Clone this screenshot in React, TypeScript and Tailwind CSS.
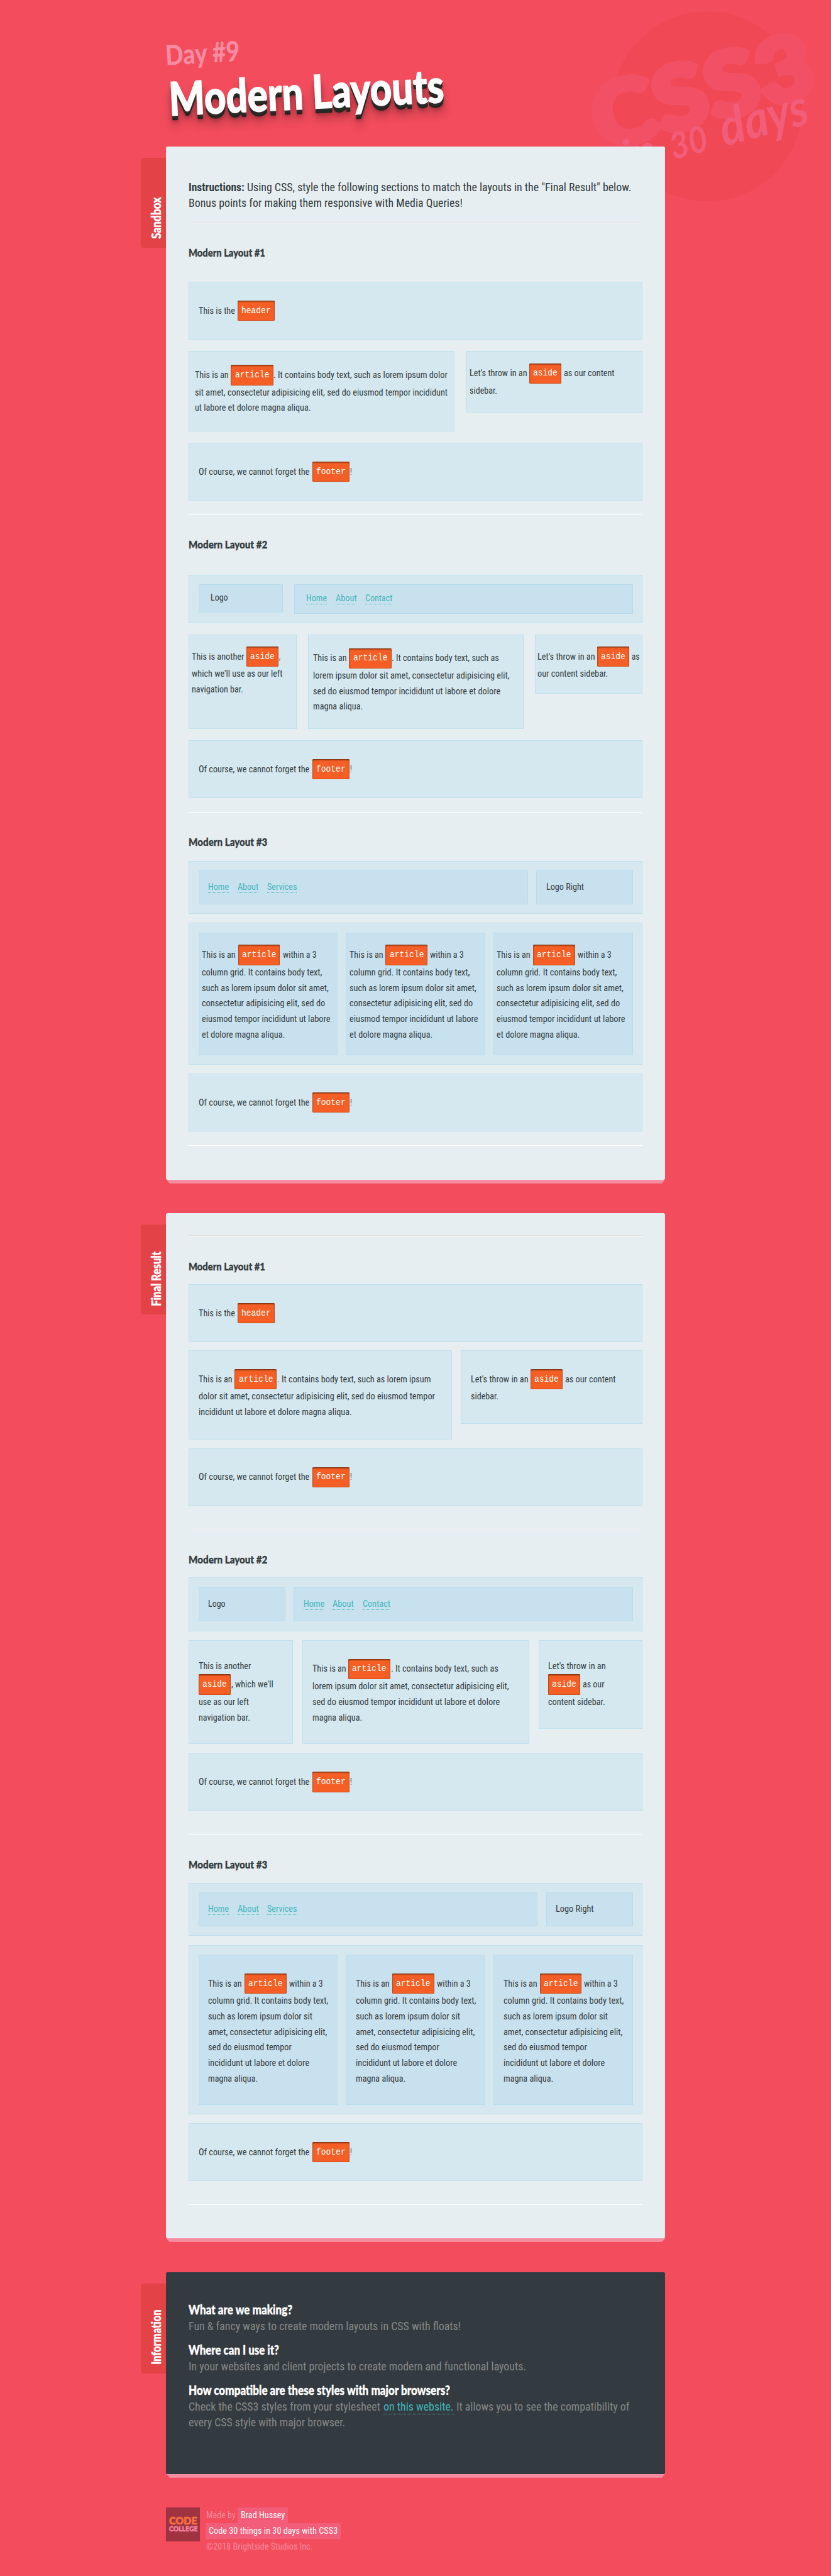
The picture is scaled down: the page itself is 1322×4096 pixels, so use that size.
import React, { useLayoutEffect, useRef } from "react";

/** A text run whose glyphs are condensed or widened to fill a given width. */
function Fit({ w, children, className = "" }: { w: number; children: string; className?: string }) {
  const ref = useRef<HTMLSpanElement>(null);
  useLayoutEffect(() => {
    const el = ref.current;
    if (!el) return;
    const natural = parseFloat(getComputedStyle(el).width);
    if (natural > 0) el.style.transform = `scaleX(${w / natural})`;
  }, [w, children]);
  return (
    <span className={`block shrink-0 text-left ${className}`} style={{ width: w }}>
      <span ref={ref} className="inline-block origin-left whitespace-pre [font-stretch:75%]">
        {children}
      </span>
    </span>
  );
}

/** Text with its width, a code tag ("#name") with its width, or a bare gap. */
type Seg = [string, number] | number;

function Tag({ name, w }: { name: string; w: number }) {
  return (
    <span
      className="flex h-[47px] shrink-0 items-center justify-center rounded-[3px] bg-[#f55f25] font-['Liberation_Mono'] text-[21px] text-white shadow-[inset_0_2px_3px_#7c2f10,inset_0_0_1px_1px_#c94c1c]"
      style={{ width: w }}
    >
      <Fit w={name.length * 11.3}>{name}</Fit>
    </span>
  );
}

function Line({ s }: { s: Seg[] }) {
  const tagged = s.some((x) => typeof x !== "number" && x[0].startsWith("#"));
  return (
    <div className={tagged ? "flex h-[46px] items-center pt-[2px]" : "flex h-[36px] items-center"}>
      {s.map((x, i) =>
        typeof x === "number" ? (
          <span key={i} className="shrink-0" style={{ width: x }} />
        ) : x[0].startsWith("#") ? (
          <Tag key={i} name={x[0].slice(1)} w={x[1]} />
        ) : (
          <Fit key={i} w={x[1]}>{x[0]}</Fit>
        ),
      )}
    </div>
  );
}

function Text({ lines }: { lines: Seg[][] }) {
  return <>{lines.map((l, i) => <Line key={i} s={l} />)}</>;
}

function Box({ className = "", children }: { className?: string; children?: React.ReactNode }) {
  return <div className={`shrink-0 border border-[#bfe0ec] bg-[#d5e8ef] ${className}`}>{children}</div>;
}

function Inner({ className = "", children }: { className?: string; children?: React.ReactNode }) {
  return <div className={`shrink-0 border border-[#b8dced] bg-[#c8e1ee] ${className}`}>{children}</div>;
}

function Rule({ className = "" }: { className?: string }) {
  return <div className={`h-[2px] bg-[linear-gradient(#dddfdf_50%,#ffffff_50%)] ${className}`} />;
}

function Heading({ n, className = "" }: { n: number; className?: string }) {
  return (
    <h3 className={`h-[36px] font-['Lato'] text-[25px] font-black leading-[36px] [-webkit-text-stroke:0.5px_#333c41] ${className}`}>
      <Fit w={n === 1 ? 177 : 182}>{`Modern Layout #${n}`}</Fit>
    </h3>
  );
}

function Nav({ items }: { items: [string, number][] }) {
  return (
    <nav className="flex gap-[20px] text-[#41b6bb]">
      {items.map(([t, w]) => (
        <a key={t} className="block h-[32px] border-b border-dotted border-[#41b6bb]">
          <Fit w={w}>{t}</Fit>
        </a>
      ))}
    </nav>
  );
}

function HeaderBox({ className }: { className: string }) {
  return (
    <Box className={`h-[133px] pl-[22px] pt-[41px] ${className}`}>
      <Line s={[["This is the", 84], 5, ["#header", 86]]} />
    </Box>
  );
}

function FooterBox({ className }: { className: string }) {
  return (
    <Box className={`h-[133px] pl-[22px] pt-[41px] ${className}`}>
      <Line s={[["Of course, we cannot forget the", 256], 6, ["#footer", 86], 2, ["!", 4]]} />
    </Box>
  );
}

function Section({ tab, tabW, tabH, className, children }: { tab: string; tabW: number; tabH: string; className: string; children: React.ReactNode }) {
  return (
    <section className={`relative w-[1153px] rounded-[4px] px-[52px] ${className}`}>
      <div className={`absolute -left-[58px] top-[26px] w-[58px] rounded-l-[6px] bg-[#e34246] ${tabH}`}>
        <div className="absolute bottom-[20px] left-[53px] h-[36px] origin-bottom-left -rotate-90 font-['Lato'] text-[29px] font-black leading-[36px] text-white [-webkit-text-stroke:0.6px_#ffffff]">
          <Fit w={tabW}>{tab}</Fit>
        </div>
      </div>
      {children}
      <div className="absolute left-0 top-full h-[9px] w-full bg-[#f68ca0] [clip-path:polygon(0_0,100%_0,calc(100%_-_8px)_100%,8px_100%)]" />
    </section>
  );
}

function Question({ w, className = "", children }: { w: number; className?: string; children: string }) {
  return (
    <h4 className={`h-[36px] font-['Lato'] text-[30px] font-black text-white [-webkit-text-stroke:0.6px_#ffffff] ${className}`}>
      <Fit w={w}>{children}</Fit>
    </h4>
  );
}

const columnWide: Seg[][] = [
  [["This is an", 78], 6, ["#article", 97], 6, ["within a 3", 78]],
  [["column grid. It contains body text,", 278]],
  [["such as lorem ipsum dolor sit amet,", 293]],
  [["consectetur adipisicing elit, sed do", 285]],
  [["eiusmod tempor incididunt ut labore", 297]],
  [["et dolore magna aliqua.", 192]],
];

const columnNarrow: Seg[][] = [
  [["This is an", 78], 6, ["#article", 97], 6, ["within a 3", 78]],
  [["column grid. It contains body text,", 278]],
  [["such as lorem ipsum dolor sit", 241]],
  [["amet, consectetur adipisicing elit,", 275]],
  [["sed do eiusmod tempor", 193]],
  [["incididunt ut labore et dolore", 234]],
  [["magna aliqua.", 115]],
];

const articleMiddle: Seg[][] = [
  [["This is an", 78], 5, ["#article", 98], 1, [". It contains body text, such as", 248]],
  [["lorem ipsum dolor sit amet, consectetur adipisicing elit,", 454]],
  [["sed do eiusmod tempor incididunt ut labore et dolore", 433]],
  [["magna aliqua.", 115]],
];

function Badge() {
  return (
    <svg className="absolute left-0 top-0 h-[500px] w-[1920px]" viewBox="0 0 1920 500">
      <circle cx="1634" cy="245.5" r="219.5" fill="#f04955" />
      <text x="1389" y="349" transform="rotate(-15 1389 349)" fontFamily="Lato" fontWeight="900" fontSize="204" textLength="522" lengthAdjust="spacingAndGlyphs" fill="#f25065" stroke="#f25065" strokeWidth="14" strokeLinejoin="round">
        CSS3
      </text>
      <g fill="#f25d79" fontFamily="Lato" fontWeight="700" fontStyle="italic">
        <text x="1448" y="396" transform="rotate(-15 1448 396)" fontSize="100">in</text>
        <text x="1556" y="369" transform="rotate(-15 1556 369)" fontSize="84" textLength="88" lengthAdjust="spacingAndGlyphs">30</text>
        <text x="1674" y="338" transform="rotate(-15 1674 338)" fontSize="118" textLength="208" lengthAdjust="spacingAndGlyphs">days</text>
      </g>
    </svg>
  );
}

export default function App() {
  return (
    <div className="h-[4096px] w-[1322px] overflow-hidden bg-[#f34c5c]">
      <div className="relative h-[5950px] w-[1920px] pl-[384px] font-['Roboto'] text-[20.8px] leading-[36px] text-[#333c41] [zoom:0.68854]">
        <Badge />

        <header className="relative h-[338px] pt-[102px] font-['Lato'] font-black">
          <div className="h-[50px] w-[172px] origin-[0_50px] -rotate-[3.6deg] text-[64px] leading-[50px] text-[#f68ba1]">
            <Fit w={172}>Day #9</Fit>
          </div>
          <h1 className="ml-[8px] mt-[32px] h-[84px] w-[638px] origin-[0_84px] -rotate-[2.8deg] text-[107px] leading-[84px] text-white [-webkit-text-stroke:2px_#ffffff] [text-shadow:0_2px_0_#2b2b28,0_4px_0_#2b2b28,0_6px_0_#2b2b28,0_8px_0_#272724,0_10px_0_#232320,0_11px_0_#232320,0_14px_10px_rgba(0,0,0,0.3),0_24px_24px_rgba(0,0,0,0.3)]">
            <Fit w={636}>Modern Layouts</Fit>
          </h1>
        </header>

        <Section tab="Sandbox" tabW={96} tabH="h-[208px]" className="h-[2386px] bg-[#e6eef1] pt-[77px]">
          <div className="text-[26px]">
            <div className="flex h-[36px]">
              <Fit w={129} className="font-bold">Instructions:</Fit>
              <Fit w={888} className="ml-[6px]">Using CSS, style the following sections to match the layouts in the "Final Result" below.</Fit>
            </div>
            <Fit w={633}>Bonus points for making them responsive with Media Queries!</Fit>
          </div>
          <Rule className="mt-[26px]" />

          <Heading n={1} className="mt-[51px]" />
          <HeaderBox className="mt-[49px]" />
          <div className="mt-[26px] flex h-[187px] items-start justify-between">
            <Box className="h-[187px] w-[614px] pl-[13px] pt-[31px]">
              <Text
                lines={[
                  [["This is an", 78], 5, ["#article", 98], 1, [". It contains body text, such as lorem ipsum dolor", 402]],
                  [["sit amet, consectetur adipisicing elit, sed do eiusmod tempor incididunt", 584]],
                  [["ut labore et dolore magna aliqua.", 268]],
                ]}
              />
            </Box>
            <Box className="h-[143px] w-[409px] pl-[8px] pt-[27px]">
              <Text
                lines={[
                  [["Let's throw in an", 133], 5, ["#aside", 74], 6, ["as our content", 117]],
                  [["sidebar.", 64]],
                ]}
              />
            </Box>
          </div>
          <FooterBox className="mt-[26px]" />
          <Rule className="mt-[32px]" />

          <Heading n={2} className="mt-[51px]" />
          <Box className="mt-[50px] flex h-[113px] items-start justify-between px-[21px] pt-[21px]">
            <Inner className="h-[65px] w-[195px] pl-[26px] pt-[12px]">
              <Fit w={40}>Logo</Fit>
            </Inner>
            <Inner className="h-[68px] w-[783px] pl-[26px] pt-[13px]">
              <Nav items={[["Home", 48], ["About", 49], ["Contact", 63]]} />
            </Inner>
          </Box>
          <div className="mt-[26px] flex h-[218px] items-start justify-between">
            <Box className="h-[218px] w-[249px] pl-[6px] pt-[25px]">
              <Text
                lines={[
                  [["This is another", 121], 5, ["#aside", 74], 1, [",", 3]],
                  [["which we'll use as our left", 210]],
                  [["navigation bar.", 119]],
                ]}
              />
            </Box>
            <Box className="h-[218px] w-[499px] pl-[11px] pt-[29px]">
              <Text lines={articleMiddle} />
            </Box>
            <Box className="h-[136px] w-[249px] pl-[5px] pt-[25px]">
              <Text
                lines={[
                  [["Let's throw in an", 133], 4, ["#aside", 74], 6, ["as", 18]],
                  [["our content sidebar.", 163]],
                ]}
              />
            </Box>
          </div>
          <FooterBox className="mt-[26px]" />
          <Rule className="mt-[32px]" />

          <Heading n={3} className="mt-[51px]" />
          <Box className="mt-[24px] flex h-[123px] items-start justify-between px-[21px] pt-[21px]">
            <Inner className="h-[79px] w-[761px] pl-[21px] pt-[19px]">
              <Nav items={[["Home", 48], ["About", 48], ["Services", 69]]} />
            </Inner>
            <Inner className="h-[79px] w-[223px] pl-[21px] pt-[19px]">
              <Fit w={87}>Logo Right</Fit>
            </Inner>
          </Box>
          <Box className="mt-[20px] flex h-[328px] items-start justify-between px-[21px] pt-[21px]">
            {[0, 1, 2].map((i) => (
              <Inner key={i} className="h-[284px] w-[322px] pl-[6px] pt-[27px]">
                <Text lines={columnWide} />
              </Inner>
            ))}
          </Box>
          <FooterBox className="mt-[21px]" />
          <Rule className="mt-[32px]" />
        </Section>

        <Section tab="Final Result" tabW={126} tabH="h-[208px]" className="mt-[78px] h-[2367px] bg-[#e6eef1] pt-[51px]">
          <Rule />
          <Heading n={1} className="mt-[52px]" />
          <HeaderBox className="mt-[23px]" />
          <div className="mt-[20px] flex h-[206px] items-start justify-between">
            <Box className="h-[206px] w-[608px] pl-[22px] pt-[41px]">
              <Text
                lines={[
                  [["This is an", 78], 5, ["#article", 97], 1, [". It contains body text, such as lorem ipsum", 355]],
                  [["dolor sit amet, consectetur adipisicing elit, sed do eiusmod tempor", 546]],
                  [["incididunt ut labore et dolore magna aliqua.", 354]],
                ]}
              />
            </Box>
            <Box className="h-[169px] w-[420px] pl-[22px] pt-[41px]">
              <Text
                lines={[
                  [["Let's throw in an", 133], 5, ["#aside", 74], 5, ["as our content", 117]],
                  [["sidebar.", 64]],
                ]}
              />
            </Box>
          </div>
          <FooterBox className="mt-[20px]" />
          <Rule className="mt-[53px]" />

          <Heading n={2} className="mt-[51px]" />
          <Box className="mt-[23px] flex h-[124px] items-start justify-between px-[21px] pt-[22px]">
            <Inner className="h-[78px] w-[201px] pl-[21px] pt-[19px]">
              <Fit w={40}>Logo</Fit>
            </Inner>
            <Inner className="h-[78px] w-[784px] pl-[21px] pt-[19px]">
              <Nav items={[["Home", 48], ["About", 49], ["Contact", 64]]} />
            </Inner>
          </Box>
          <div className="mt-[21px] flex h-[240px] items-start justify-between">
            <Box className="h-[240px] w-[241px] pl-[22px] pt-[41px]">
              <Text
                lines={[
                  [["This is another", 121]],
                  [["#aside", 74], 1, [", which we'll", 97]],
                  [["use as our left", 116]],
                  [["navigation bar.", 119]],
                ]}
              />
            </Box>
            <Box className="h-[240px] w-[525px] pl-[22px] pt-[41px]">
              <Text lines={articleMiddle} />
            </Box>
            <Box className="h-[205px] w-[241px] pl-[21px] pt-[41px]">
              <Text
                lines={[
                  [["Let's throw in an", 133]],
                  [["#aside", 74], 6, ["as our", 50]],
                  [["content sidebar.", 132]],
                ]}
              />
            </Box>
          </div>
          <FooterBox className="mt-[21px]" />
          <Rule className="mt-[53px]" />

          <Heading n={3} className="mt-[52px]" />
          <Box className="mt-[23px] flex h-[123px] items-start justify-between px-[21px] pt-[21px]">
            <Inner className="h-[79px] w-[784px] pl-[21px] pt-[19px]">
              <Nav items={[["Home", 48], ["About", 49], ["Services", 69]]} />
            </Inner>
            <Inner className="h-[79px] w-[201px] pl-[21px] pt-[19px]">
              <Fit w={88}>Logo Right</Fit>
            </Inner>
          </Box>
          <Box className="mt-[21px] flex h-[391px] items-start justify-between px-[21px] pt-[21px]">
            {[0, 1, 2].map((i) => (
              <Inner key={i} className="h-[347px] w-[322px] pl-[21px] pt-[41px]">
                <Text lines={columnNarrow} />
              </Inner>
            ))}
          </Box>
          <FooterBox className="mt-[21px]" />
          <Rule className="mt-[54px]" />
        </Section>

        <Section tab="Information" tabW={127} tabH="h-[208px]" className="mt-[78px] h-[466px] bg-[#333b40] pt-[69px] text-[26px] text-[#868786]">
          <Question w={240}>What are we making?</Question>
          <div className="mt-[3px] h-[36px]"><Fit w={629}>{"Fun & fancy ways to create modern layouts in CSS with floats!"}</Fit></div>
          <Question w={209} className="mt-[18px]">Where can I use it?</Question>
          <div className="mt-[3px] h-[36px]"><Fit w={780}>In your websites and client projects to create modern and functional layouts.</Fit></div>
          <Question w={604} className="mt-[18px]">How compatible are these styles with major browsers?</Question>
          <div className="mt-[3px] flex h-[36px]">
            <Fit w={443}>Check the CSS3 styles from your stylesheet</Fit>
            <a className="ml-[7px] block h-[35px] border-b border-dotted border-[#41b6bb] text-[#41b6bb]"><Fit w={162}>on this website.</Fit></a>
            <Fit w={400} className="ml-[6px]">It allows you to see the compatibility of</Fit>
          </div>
          <Fit w={362}>every CSS style with major browser.</Fit>
        </Section>

        <footer className="mt-[78px] flex items-start text-[#f68ba1]">
          <div className="flex h-[78px] w-[78px] flex-col items-center bg-[#9f3342] pt-[20px] font-['Lato'] font-black">
            <div className="h-[21px] text-[24px] leading-[22px] text-[#f7703f] [-webkit-text-stroke:1px_#f7703f]"><Fit w={65}>CODE</Fit></div>
            <div className="h-[14px] text-[16px] leading-[14px] text-[#f6849e] [-webkit-text-stroke:0.8px_#f6849e]"><Fit w={66}>COLLEGE</Fit></div>
          </div>
          <div className="ml-[13px]">
            <div className="flex">
              <Fit w={68} className="ml-[1px]">Made by</Fit>
              <a className="ml-[5px] block bg-[#f25d79] px-[7px] text-white"><Fit w={102}>Brad Hussey</Fit></a>
            </div>
            <div className="flex">
              <a className="block bg-[#f25d79] px-[7px] text-white"><Fit w={298}>Code 30 things in 30 days with CSS3</Fit></a>
            </div>
            <Fit w={246} className="ml-[1px]">©2018 Brightside Studios Inc.</Fit>
          </div>
        </footer>
      </div>
    </div>
  );
}
